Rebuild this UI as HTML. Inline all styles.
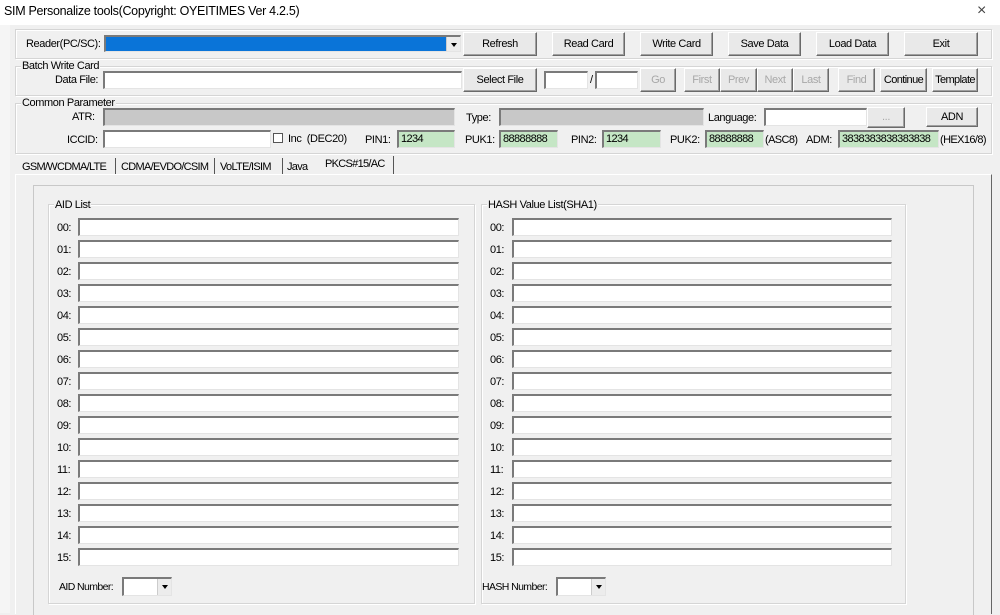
<!DOCTYPE html>
<html><head><meta charset="utf-8"><style>
*{box-sizing:border-box}
body{margin:0;width:1000px;height:613px;overflow:hidden;background:#f0f0f0;font-family:"Liberation Sans",sans-serif;font-size:11px;color:#000;position:relative;letter-spacing:-0.4px}
.a{position:absolute}
.title{left:0;top:0;width:1000px;height:25px;background:#fff}
.side{left:0;top:25px;width:10px;height:588px;background:#f5f5f5}
.grp{position:absolute;border:1px solid #d5d5d5;box-shadow:inset 1px 1px 0 #fff,1px 1px 0 #fff}
.gl{position:absolute;background:#f0f0f0;padding:0 1px;line-height:12px}
.btn{position:absolute;background:#e9e9e9;border:1px solid #fff;border-right-color:#6a6a6a;border-bottom-color:#6a6a6a;box-shadow:inset -1px -1px 0 #a0a0a0;text-align:center;font-size:11px}
.dis{color:#a8a8a8}
.in{position:absolute;background:#fff;border-top:2px solid #7a7a7a;border-left:2px solid #7a7a7a;border-bottom:1px solid #e4e4e4;border-right:1px solid #e4e4e4}
.gr{background:#c8c8c8}
.gn{background:#c5e6c5;padding-left:2px;line-height:14px;letter-spacing:-0.6px}
.lb{position:absolute;line-height:13px}
.tb{position:absolute;line-height:13px;letter-spacing:-0.7px}
.arr{position:absolute;width:14px;background:#ececec;border-left:1px solid #ccc}
.arr:after{content:"";position:absolute;left:4px;top:6px;border-left:3px solid transparent;border-right:3px solid transparent;border-top:4px solid #000}
</style></head><body>
<div class="a title"></div>
<div class="a" style="left:4px;top:4px;font-size:12.5px;letter-spacing:-0.3px">SIM Personalize tools(Copyright: OYEITIMES Ver 4.2.5)</div>
<div class="a" style="left:977px;top:2px;font-size:16px;color:#444">×</div>
<div class="a side"></div>

<div class="grp" style="left:15px;top:29px;width:977px;height:30px"></div>
<div class="lb" style="left:26px;top:38px">Reader(PC/SC):</div>
<div class="in" style="left:104px;top:35px;width:357px;height:17px;background:#0a74d8"><div class="arr" style="right:0;top:0;height:14px"></div></div>
<div class="btn" style="left:463px;top:32px;width:74px;height:24px;line-height:22px">Refresh</div>
<div class="btn" style="left:552px;top:32px;width:73px;height:24px;line-height:22px">Read Card</div>
<div class="btn" style="left:640px;top:32px;width:73px;height:24px;line-height:22px">Write Card</div>
<div class="btn" style="left:728px;top:32px;width:73px;height:24px;line-height:22px">Save Data</div>
<div class="btn" style="left:816px;top:32px;width:73px;height:24px;line-height:22px">Load Data</div>
<div class="btn" style="left:904px;top:32px;width:74px;height:24px;line-height:22px">Exit</div>

<div class="grp" style="left:15px;top:66px;width:977px;height:30px"></div>
<div class="gl" style="left:21px;top:60px">Batch Write Card</div>
<div class="lb" style="left:55px;top:74px">Data File:</div>
<div class="in" style="left:103px;top:71px;width:359px;height:18px"></div>
<div class="btn" style="left:463px;top:68px;width:74px;height:24px;line-height:22px">Select File</div>
<div class="in" style="left:544px;top:71px;width:44px;height:18px"></div>
<div class="lb" style="left:590px;top:74px">/</div>
<div class="in" style="left:595px;top:71px;width:43px;height:18px"></div>
<div class="btn dis" style="left:640px;top:68px;width:36px;height:24px;line-height:22px">Go</div>
<div class="btn dis" style="left:684px;top:68px;width:36px;height:24px;line-height:22px">First</div>
<div class="btn dis" style="left:720px;top:68px;width:37px;height:24px;line-height:22px">Prev</div>
<div class="btn dis" style="left:757px;top:68px;width:36px;height:24px;line-height:22px">Next</div>
<div class="btn dis" style="left:793px;top:68px;width:36px;height:24px;line-height:22px">Last</div>
<div class="btn dis" style="left:838px;top:68px;width:37px;height:24px;line-height:22px">Find</div>
<div class="btn" style="left:880px;top:68px;width:47px;height:24px;line-height:22px;letter-spacing:-0.6px">Continue</div>
<div class="btn" style="left:932px;top:68px;width:46px;height:24px;line-height:22px;letter-spacing:-0.6px">Template</div>

<div class="grp" style="left:15px;top:103px;width:977px;height:51px"></div>
<div class="gl" style="left:21px;top:97px">Common Parameter</div>
<div class="lb" style="left:72px;top:111px">ATR:</div>
<div class="in gr" style="left:103px;top:108px;width:352px;height:18px"></div>
<div class="lb" style="left:466px;top:112px">Type:</div>
<div class="in gr" style="left:499px;top:108px;width:205px;height:18px"></div>
<div class="lb" style="left:708px;top:112px">Language:</div>
<div class="in" style="left:764px;top:108px;width:103px;height:18px"></div>
<div class="btn dis" style="left:867px;top:107px;width:38px;height:21px;line-height:19px">...</div>
<div class="btn" style="left:926px;top:107px;width:52px;height:20px;line-height:18px">ADN</div>
<div class="lb" style="left:67px;top:134px">ICCID:</div>
<div class="in" style="left:103px;top:130px;width:168px;height:18px"></div>
<div class="a" style="left:273px;top:133px;width:10px;height:10px;border:1px solid #555;background:#fff"></div>
<div class="lb" style="left:288px;top:133px">Inc &nbsp;(DEC20)</div>
<div class="lb" style="left:365px;top:134px">PIN1:</div>
<div class="in gn" style="left:397px;top:130px;width:58px;height:18px">1234</div>
<div class="lb" style="left:465px;top:134px">PUK1:</div>
<div class="in gn" style="left:499px;top:130px;width:59px;height:18px">88888888</div>
<div class="lb" style="left:571px;top:134px">PIN2:</div>
<div class="in gn" style="left:602px;top:130px;width:59px;height:18px">1234</div>
<div class="lb" style="left:670px;top:134px">PUK2:</div>
<div class="in gn" style="left:705px;top:130px;width:59px;height:18px">88888888</div>
<div class="lb" style="left:765px;top:134px;letter-spacing:-0.6px">(ASC8)</div>
<div class="lb" style="left:806px;top:134px">ADM:</div>
<div class="in gn" style="left:838px;top:130px;width:101px;height:18px">3838383838383838</div>
<div class="lb" style="left:940px;top:134px;letter-spacing:-0.6px">(HEX16/8)</div>

<div class="tb" style="left:22px;top:161px">GSM/WCDMA/LTE</div>
<div class="a" style="left:115px;top:158px;width:1px;height:16px;background:#555"></div>
<div class="tb" style="left:121px;top:161px">CDMA/EVDO/CSIM</div>
<div class="a" style="left:214px;top:158px;width:1px;height:16px;background:#555"></div>
<div class="tb" style="left:220px;top:161px">VoLTE/ISIM</div>
<div class="a" style="left:282px;top:158px;width:1px;height:16px;background:#555"></div>
<div class="tb" style="left:287px;top:161px">Java</div>
<div class="tb" style="left:325px;top:158px">PKCS#15/AC</div>
<div class="a" style="left:393px;top:156px;width:1px;height:19px;background:#555"></div>
<div class="a" style="left:15px;top:174px;width:977px;height:440px;border-top:1px solid #fff;border-left:1px solid #fff;border-right:1px solid #666"></div>
<div class="a" style="left:33px;top:185px;width:941px;height:430px;border-top:1px solid #c8c8c8;border-left:1px solid #c8c8c8;border-right:1px solid #c8c8c8"></div>

<div class="grp" style="left:48px;top:204px;width:427px;height:400px"></div>
<div class="gl" style="left:54px;top:199px">AID List</div>
<div class="grp" style="left:481px;top:204px;width:425px;height:400px"></div>
<div class="gl" style="left:487px;top:199px">HASH Value List(SHA1)</div>

<div class="lb" style="left:57px;top:217px;line-height:22px">00:<br>01:<br>02:<br>03:<br>04:<br>05:<br>06:<br>07:<br>08:<br>09:<br>10:<br>11:<br>12:<br>13:<br>14:<br>15:</div>
<div class="lb" style="left:490px;top:217px;line-height:22px">00:<br>01:<br>02:<br>03:<br>04:<br>05:<br>06:<br>07:<br>08:<br>09:<br>10:<br>11:<br>12:<br>13:<br>14:<br>15:</div>

<div class="in" style="left:78px;top:218px;width:381px;height:18px"></div><div class="in" style="left:512px;top:218px;width:380px;height:18px"></div>
<div class="in" style="left:78px;top:240px;width:381px;height:18px"></div><div class="in" style="left:512px;top:240px;width:380px;height:18px"></div>
<div class="in" style="left:78px;top:262px;width:381px;height:18px"></div><div class="in" style="left:512px;top:262px;width:380px;height:18px"></div>
<div class="in" style="left:78px;top:284px;width:381px;height:18px"></div><div class="in" style="left:512px;top:284px;width:380px;height:18px"></div>
<div class="in" style="left:78px;top:306px;width:381px;height:18px"></div><div class="in" style="left:512px;top:306px;width:380px;height:18px"></div>
<div class="in" style="left:78px;top:328px;width:381px;height:18px"></div><div class="in" style="left:512px;top:328px;width:380px;height:18px"></div>
<div class="in" style="left:78px;top:350px;width:381px;height:18px"></div><div class="in" style="left:512px;top:350px;width:380px;height:18px"></div>
<div class="in" style="left:78px;top:372px;width:381px;height:18px"></div><div class="in" style="left:512px;top:372px;width:380px;height:18px"></div>
<div class="in" style="left:78px;top:394px;width:381px;height:18px"></div><div class="in" style="left:512px;top:394px;width:380px;height:18px"></div>
<div class="in" style="left:78px;top:416px;width:381px;height:18px"></div><div class="in" style="left:512px;top:416px;width:380px;height:18px"></div>
<div class="in" style="left:78px;top:438px;width:381px;height:18px"></div><div class="in" style="left:512px;top:438px;width:380px;height:18px"></div>
<div class="in" style="left:78px;top:460px;width:381px;height:18px"></div><div class="in" style="left:512px;top:460px;width:380px;height:18px"></div>
<div class="in" style="left:78px;top:482px;width:381px;height:18px"></div><div class="in" style="left:512px;top:482px;width:380px;height:18px"></div>
<div class="in" style="left:78px;top:504px;width:381px;height:18px"></div><div class="in" style="left:512px;top:504px;width:380px;height:18px"></div>
<div class="in" style="left:78px;top:526px;width:381px;height:18px"></div><div class="in" style="left:512px;top:526px;width:380px;height:18px"></div>
<div class="in" style="left:78px;top:548px;width:381px;height:18px"></div><div class="in" style="left:512px;top:548px;width:380px;height:18px"></div>

<div class="lb" style="left:59px;top:581px;font-size:10.5px;letter-spacing:-0.6px">AID Number:</div>
<div class="in" style="left:122px;top:577px;width:50px;height:19px"><div class="arr" style="right:0;top:0;height:16px"></div></div>
<div class="lb" style="left:482px;top:581px;font-size:10.5px;letter-spacing:-0.6px">HASH Number:</div>
<div class="in" style="left:556px;top:577px;width:50px;height:19px"><div class="arr" style="right:0;top:0;height:16px"></div></div>
</body></html>
